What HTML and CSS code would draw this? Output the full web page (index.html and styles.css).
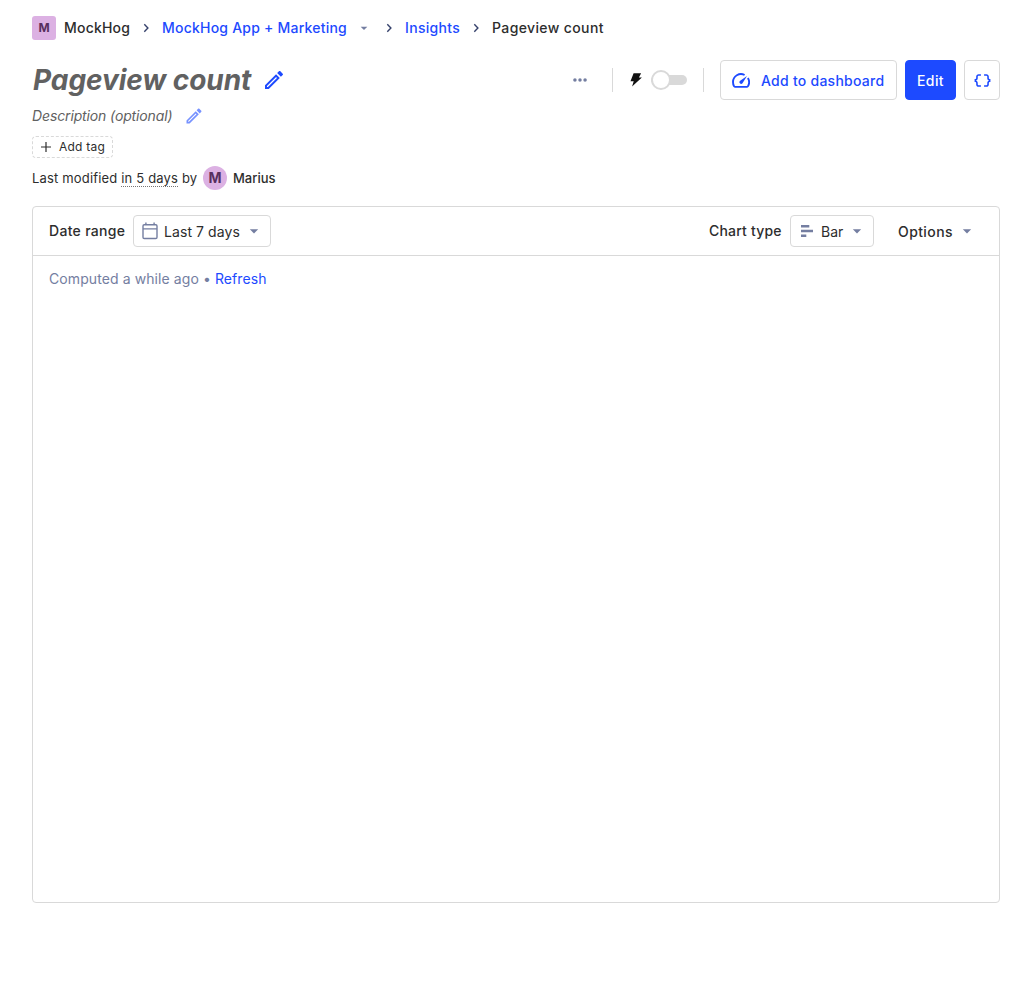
FILE: index.html
```html
<!DOCTYPE html>
<html lang="en">
<head>
<meta charset="utf-8">
<title>Pageview count</title>
<link rel="stylesheet" href="styles.css">
</head>
<body>
<svg class="defs" width="0" height="0">
  <symbol id="chevron" viewBox="0 0 12 12"><path d="M4.3 2.3 7.9 6 4.3 9.7" fill="none" stroke="currentColor" stroke-width="1.4"/></symbol>
  <symbol id="caret" viewBox="0 0 24 24"><path d="m7 10 5 5 5-5z" fill="currentColor"/></symbol>
  <symbol id="pencil" viewBox="0 0 24 24"><path fill="currentColor" d="M14.06 9.02l.92.92L5.92 19H5v-.92l9.06-9.06M17.66 3c-.25 0-.51.1-.7.29l-1.83 1.83 3.75 3.75 1.83-1.83a.996.996 0 000-1.41l-2.34-2.34c-.2-.2-.45-.29-.71-.29zm-3.6 3.19L3 17.25V21h3.75L17.81 9.94l-3.75-3.75z"/></symbol>
</svg>
<main class="scene">
  <nav class="crumbs">
    <span class="lettermark">M</span>
    <span class="crumb crumb-org">MockHog</span>
    <svg class="chevron"><use href="#chevron"/></svg>
    <a class="crumb crumb-project link">MockHog App + Marketing</a>
    <svg class="crumb-caret"><use href="#caret"/></svg>
    <svg class="chevron"><use href="#chevron"/></svg>
    <a class="crumb crumb-section link">Insights</a>
    <svg class="chevron"><use href="#chevron"/></svg>
    <span class="crumb crumb-page">Pageview count</span>
  </nav>
  <header class="title-row">
    <h1 class="title">Pageview count</h1>
    <svg class="title-edit"><use href="#pencil"/></svg>
    <div class="actions">
      <svg class="more" viewBox="0 0 16 16"><g fill="currentColor"><circle cx="2.2" cy="8" r="2"/><circle cx="8" cy="8" r="2"/><circle cx="13.8" cy="8" r="2"/></g></svg>
      <span class="divider"></span>
      <svg class="bolt" viewBox="0 0 12 14"><path fill="currentColor" d="M3.6.3h7.5L8.9 4.6h3L2.1 13.4 3.7 8.2H.5z"/></svg>
      <span class="switch"><span class="knob"></span></span>
      <span class="divider"></span>
      <button class="btn btn-dashboard">
        <svg class="gauge" viewBox="0 0 18 15"><path fill="none" stroke="currentColor" stroke-width="1.9" d="M12.6 2A8 8 0 0 0 1 9c0 1.9.5 3.3 1.1 4.3.3.4.6.6 1.1.6h11.6c.5 0 .8-.2 1.1-.6A8 8 0 0 0 15.9 5"/><path fill="currentColor" d="M15 3 10.500 10.200a1.700 1.700 0 0 1-2.700-2.200z"/></svg>
        <span>Add to dashboard</span>
      </button>
      <button class="btn btn-primary">Edit</button>
      <button class="btn btn-code">
        <svg class="braces" viewBox="0 0 24 24"><path fill="currentColor" d="M4 7v2c0 .55-.45 1-1 1H2v4h1c.55 0 1 .45 1 1v2c0 1.65 1.35 3 3 3h3v-2H7c-.55 0-1-.45-1-1v-2c0-1.3-.84-2.42-2-2.83v-.34C5.16 11.42 6 10.3 6 9V7c0-.55.45-1 1-1h3V4H7C5.35 4 4 5.35 4 7zM21 10c-.55 0-1-.45-1-1V7c0-1.65-1.35-3-3-3h-3v2h3c.55 0 1 .45 1 1v2c0 1.3.84 2.42 2 2.83v.34c-1.16.41-2 1.52-2 2.83v2c0 .55-.45 1-1 1h-3v2h3c1.65 0 3-1.35 3-3v-2c0-.55.45-1 1-1h1v-4h-1z"/></svg>
      </button>
    </div>
  </header>
  <div class="description">
    <span>Description (optional)</span>
    <svg class="desc-edit"><use href="#pencil"/></svg>
  </div>
  <div class="tag">
    <svg class="plus" viewBox="0 0 10 10"><path d="M5 0v10M0 5h10" stroke="currentColor" stroke-width="1.2"/></svg>
    <span>Add tag</span>
  </div>
  <div class="modified">
    <span class="modified-text">Last modified <span class="when">in 5 days</span> by</span>
    <span class="avatar">M</span>
    <span class="author">Marius</span>
  </div>
  <section class="card">
    <div class="filters">
      <span class="label">Date range</span>
      <button class="select select-date">
        <svg class="calendar" viewBox="0 0 16 18"><g fill="none" stroke="currentColor" stroke-width="1.4"><rect x="1" y="2.700" width="14" height="13.800" rx="1.200"/><path d="M1 6.900h14M3.900.6v2.200M12.100.6v2.200"/></g></svg>
        <span>Last 7 days</span>
        <svg class="caret"><use href="#caret"/></svg>
      </button>
      <span class="label chart-label">Chart type</span>
      <button class="select select-chart">
        <svg class="bars" viewBox="0 0 12 12"><path fill="currentColor" d="M0 0h8.300v2.500H0zM0 4.750h12v2.500H0zM0 9.500h5.300V12H0z"/></svg>
        <span>Bar</span>
        <svg class="caret"><use href="#caret"/></svg>
      </button>
      <button class="options">
        <span>Options</span>
        <svg class="caret"><use href="#caret"/></svg>
      </button>
    </div>
    <div class="computed">Computed a while ago <span class="dot">•</span> <a class="link">Refresh</a></div>
  </section>
</main>
</body>
</html>
```
FILE: styles.css
```css
* { box-sizing: border-box; }
body { margin: 0; background: #fff; color: #2d2d2d; font: 14px/20px Inter, "Liberation Sans", sans-serif; }
svg { display: block; flex: none; }
button { font: inherit; color: inherit; background: #fff; margin: 0; padding: 0; letter-spacing: inherit; }
.defs { position: absolute; }
.scene { padding: 16px 32px; }
.link { color: #1d4aff; }

.crumbs { display: flex; align-items: center; height: 24px; font-weight: 500; white-space: nowrap; }
.lettermark { width: 24px; height: 24px; margin-right: 8px; border-radius: 3px; background: #dcb1e3; color: #572e5e; font-size: 12px; font-weight: 700; line-height: 24px; text-align: center; }
.crumb-org { width: 66px; letter-spacing: .2px; }
.crumb-project { width: 185px; letter-spacing: .22px; }
.crumb-section { width: 55px; letter-spacing: .32px; }
.crumb-page { letter-spacing: .38px; }
.chevron { width: 12px; height: 12px; margin: 0 10px; color: #35416b; }
.crumb-caret { width: 16px; height: 16px; margin: 0 1px 0 9px; color: #747ea1; }

.title-row { display: flex; align-items: center; height: 40px; margin-top: 20px; }
.title { width: 219px; margin: 0; padding-left: 1px; color: #616161; font-size: 28px; line-height: 40px; font-weight: 700; font-style: italic; letter-spacing: -.05px; white-space: nowrap; }
.title-edit { width: 24px; height: 24px; margin-left: 11px; color: #1d4aff; }
.actions { display: flex; align-items: center; margin-left: auto; }
.more { width: 14px; height: 14px; margin-right: 25px; color: #747ea1; }
.divider { width: 1px; height: 24px; background: #d9d9d9; }
.bolt { width: 12px; height: 14px; margin: 0 9px 0 17px; color: #111; }
.switch { position: relative; width: 36px; height: 10px; margin-right: 16px; border-radius: 5px; background: #d9d9d9; }
.knob { position: absolute; left: 0; top: -5px; width: 20px; height: 20px; border: 2px solid #d9d9d9; border-radius: 50%; background: #fff; }
.btn { display: flex; align-items: center; justify-content: center; height: 40px; border: 1px solid #d9d9d9; border-radius: 4px; color: #1d4aff; font-weight: 500; padding-top: 2px; white-space: nowrap; letter-spacing: .26px; }
.btn-dashboard { width: 177px; margin-left: 16px; padding-left: 11px; gap: 11px; justify-content: flex-start; }
.gauge { width: 18px; height: 15px; margin-top: -1px; }
.btn-primary { width: 51px; margin: 0 8px; border-color: #1d4aff; background: #1d4aff; color: #fff; letter-spacing: .4px; }
.btn-code { width: 36px; padding: 0; }
.braces { width: 19px; height: 19px; }

.description { display: flex; align-items: center; height: 20px; margin-top: 6px; color: #616161; font-style: italic; letter-spacing: -.13px; }
.desc-edit { width: 20px; height: 20px; margin-left: 12px; color: #1d4aff; opacity: .6; }
.tag { display: flex; align-items: center; width: 81px; height: 22px; margin-top: 10px; padding-left: 8px; gap: 8px; border: 1px dashed #d9d9d9; border-radius: 4px; font-size: 12px; letter-spacing: .22px; white-space: nowrap; }
.plus { width: 10px; height: 10px; }
.modified { display: flex; align-items: center; height: 24px; margin-top: 8px; font-size: 13px; white-space: nowrap; }
.modified-text { width: 165px; letter-spacing: .17px; }
.when { border-bottom: 1px dotted #747474; }
.avatar { width: 24px; height: 24px; margin: 0 6px; border-radius: 50%; background: #dcb1e3; color: #572e5e; font-size: 14px; font-weight: 700; line-height: 24px; text-align: center; }
.author { font-weight: 500; }

.card { height: 697px; margin-top: 16px; border: 1px solid #d9d9d9; border-radius: 4px; }
.filters { display: flex; align-items: center; height: 49px; padding: 0 16px; border-bottom: 1px solid #d9d9d9; white-space: nowrap; }
.label { width: 76px; font-weight: 500; letter-spacing: .3px; }
.chart-label { width: 73px; margin-left: auto; letter-spacing: .2px; }
.select { display: flex; align-items: center; height: 32px; margin-left: 8px; border: 1px solid #d9d9d9; border-radius: 4px; }
.select span, .options span { padding-top: 2px; }
.select-date { width: 138px; padding-left: 8px; letter-spacing: .08px; }
.calendar { width: 16px; height: 18px; margin-right: 6px; color: #747ea1; }
.caret { width: 20px; height: 20px; margin-left: 4px; color: #747ea1; }
.select-chart { width: 84px; padding-left: 10px; }
.bars { width: 12px; height: 12px; margin-right: 8px; color: #747ea1; }
.options { display: flex; align-items: center; width: 101px; margin-left: 8px; padding-left: 16px; border: 0; font-weight: 500; letter-spacing: .4px; }
.computed { padding: 13px 16px; color: #747ea1; letter-spacing: .09px; }
```
